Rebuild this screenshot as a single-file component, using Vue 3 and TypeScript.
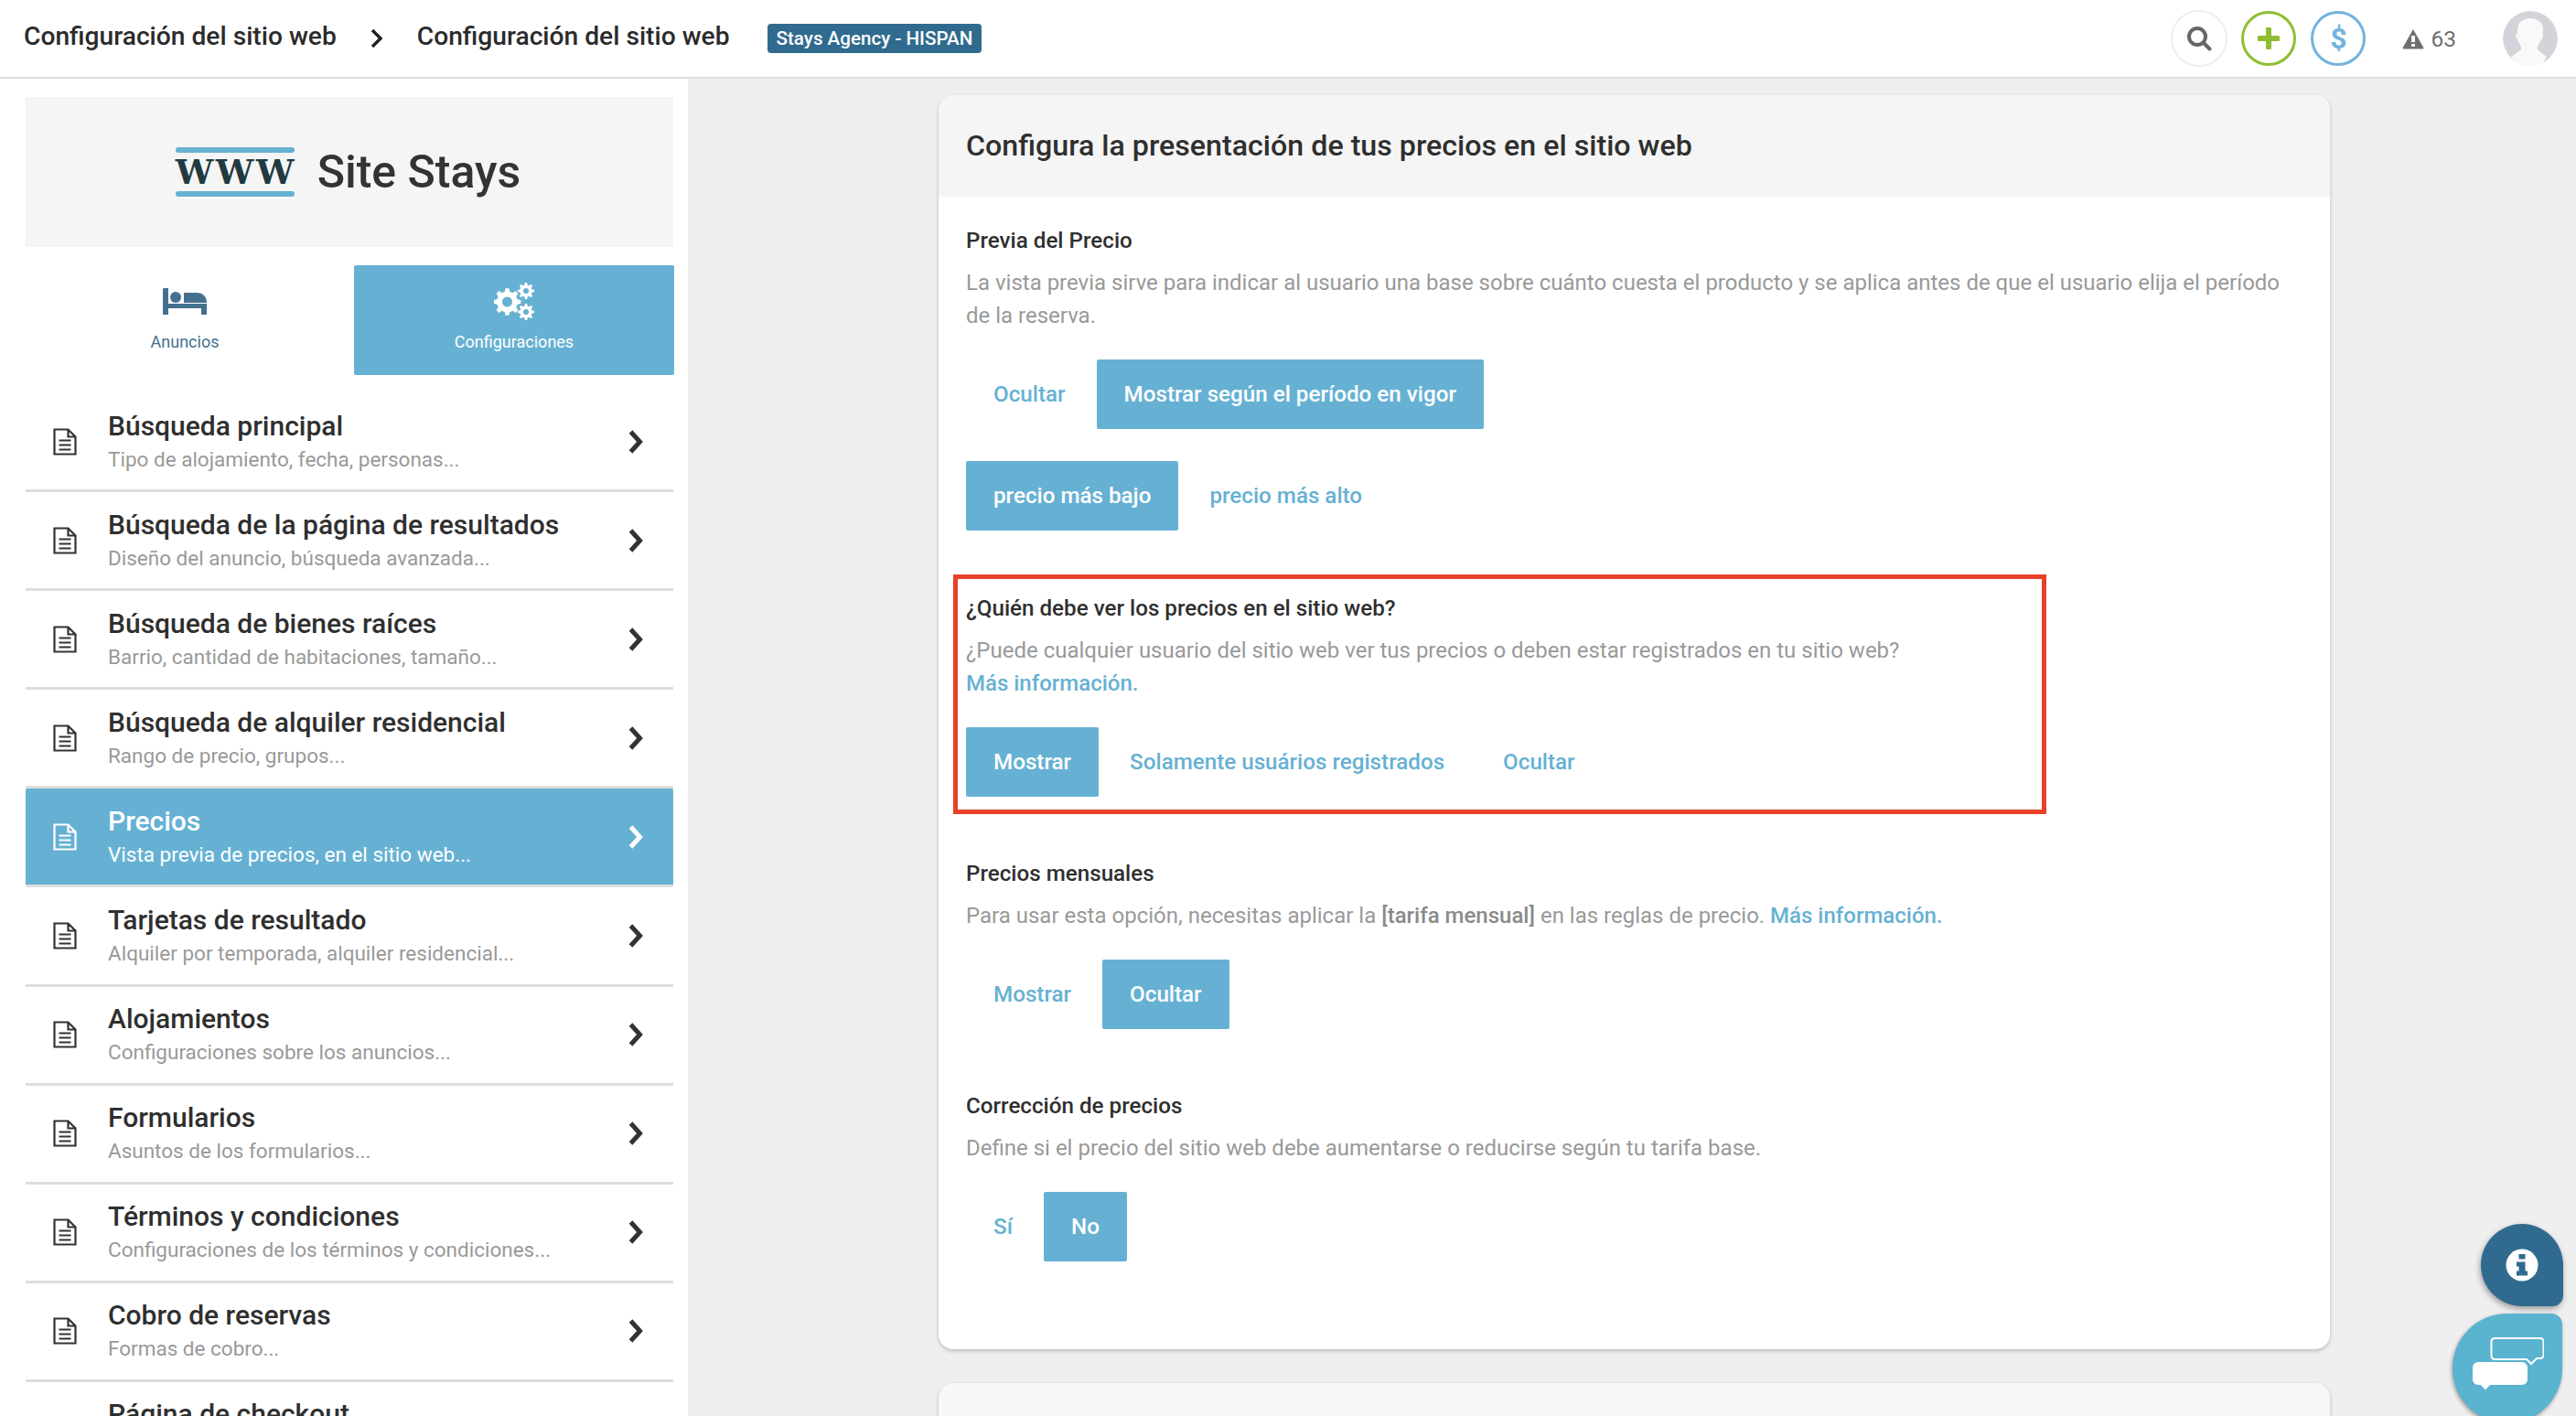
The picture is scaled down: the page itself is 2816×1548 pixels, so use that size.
<script setup lang="ts">
type Row = { t: string; s?: string; active?: boolean }
const rows: Row[] = [
  { t: 'Búsqueda principal', s: 'Tipo de alojamiento, fecha, personas...' },
  { t: 'Búsqueda de la página de resultados', s: 'Diseño del anuncio, búsqueda avanzada...' },
  { t: 'Búsqueda de bienes raíces', s: 'Barrio, cantidad de habitaciones, tamaño...' },
  { t: 'Búsqueda de alquiler residencial', s: 'Rango de precio, grupos...' },
  { t: 'Precios', s: 'Vista previa de precios, en el sitio web...', active: true },
  { t: 'Tarjetas de resultado', s: 'Alquiler por temporada, alquiler residencial...' },
  { t: 'Alojamientos', s: 'Configuraciones sobre los anuncios...' },
  { t: 'Formularios', s: 'Asuntos de los formularios...' },
  { t: 'Términos y condiciones', s: 'Configuraciones de los términos y condiciones...' },
  { t: 'Cobro de reservas', s: 'Formas de cobro...' },
  { t: 'Página de checkout' },
]

function gear(cx: number, cy: number, ro: number, ri: number, hole: number, teeth: number): string {
  const step = (Math.PI * 2) / teeth
  const pts: string[] = []
  const at = (r: number, a: number) => `${(cx + r * Math.cos(a)).toFixed(2)} ${(cy + r * Math.sin(a)).toFixed(2)}`
  for (let i = 0; i < teeth; i++) {
    const a = i * step
    pts.push(at(ri, a - step * 0.3), at(ro, a - step * 0.17), at(ro, a + step * 0.17), at(ri, a + step * 0.3))
  }
  const ring = `M${pts.join('L')}Z`
  const h = `M${cx - hole} ${cy}a${hole} ${hole} 0 1 0 ${hole * 2} 0a${hole} ${hole} 0 1 0 ${-hole * 2} 0Z`
  return ring + h
}
const cogs = gear(14.5, 21, 15, 11.5, 5.5, 8) + gear(35, 9, 9, 6.8, 3, 8) + gear(35, 32, 9, 6.8, 3, 8)
</script>

<template>
  <div class="page">
    <header class="top">
      <div class="crumbs">
        <span class="crumb">Configuración del sitio web</span>
        <svg class="crumb-chev" viewBox="0 0 14 22"><path d="M3 2l9 9-9 9" fill="none" stroke="#222" stroke-width="3.4" /></svg>
        <span class="crumb">Configuración del sitio web</span>
        <span class="badge">Stays Agency - HISPAN</span>
      </div>
      <div class="tools">
        <span class="circle c-search">
          <svg viewBox="0 0 28 28" width="28" height="28"><circle cx="12" cy="12" r="9" fill="none" stroke="#666" stroke-width="4" /><path d="M19 19L25.500 25.500" stroke="#666" stroke-width="4" stroke-linecap="round" /></svg>
        </span>
        <span class="circle c-plus">
          <svg viewBox="0 0 24 24" width="24" height="24"><path d="M12 2v20M2 12h20" stroke="#8fbe35" stroke-width="6" stroke-linecap="round" /></svg>
        </span>
        <span class="circle c-dollar">$</span>
        <span class="alert">
          <svg viewBox="0 0 24 23" width="24" height="23"><path d="M12 1L23.500 21.500a1 1 0 0 1-1 1H1.500a1 1 0 0 1-1-1z" fill="#6f6f6f" /><rect x="10" y="8" width="4" height="7" fill="#fff" /><rect x="10" y="17" width="4" height="3" fill="#fff" /></svg>
          <span>63</span>
        </span>
        <span class="avatar">
          <svg viewBox="0 0 60 60" width="60" height="60"><circle cx="30" cy="30" r="30" fill="#d2d4da" /><path d="M16 20c0-8 7-12 14-12s14 4 14 12c0 3-1 5 0 7 1 1-2 4-3 6-1 3-4 6-3 9 1 2 6 5 10 8l-6 10H18L9 50c4-3 9-6 11-8 1-3-2-6-3-9-1-3-4-5-3-6 2-2 2-4 2-7z" fill="#f8f9f9" /></svg>
        </span>
      </div>
    </header>

    <div class="body">
      <aside class="side">
        <div class="logo">
          <div class="www"><i></i><b>WWW</b><i></i></div>
          <span class="logo-text">Site Stays</span>
        </div>
        <div class="tabs">
          <div class="tab tab-off">
            <svg viewBox="0 0 48 29" width="48" height="29"><path d="M1 0h5v17h42v12h-6v-7H6v7H0V1a1 1 0 0 1 1-1z" fill="#44708f" /><circle cx="14" cy="10" r="6" fill="#44708f" /><path d="M23 5h15a10 10 0 0 1 10 10v1H23z" fill="#44708f" /></svg>
            <span>Anuncios</span>
          </div>
          <div class="tab tab-on">
            <svg viewBox="0 0 44 42" width="44" height="42"><path :d="cogs" fill="#fff" fill-rule="evenodd" /></svg>
            <span>Configuraciones</span>
          </div>
        </div>
        <ul class="list">
          <li v-for="r in rows" :key="r.t" class="row" :class="{ on: r.active }">
            <svg class="doc" viewBox="0 0 26 30" width="26" height="30"><path d="M1.500 1.500h15l8 8v19H1.500zM16.500 1.500v8h8M6.500 13.500h13M6.500 18.500h13M6.500 23.500h13" fill="none" stroke="currentColor" stroke-width="2.200" /></svg>
            <div class="row-text">
              <div class="row-title">{{ r.t }}</div>
              <div v-if="r.s" class="row-sub">{{ r.s }}</div>
            </div>
            <svg class="chev" viewBox="0 0 18 28" width="18" height="28"><path d="M3.500 3l10 11-10 11" fill="none" stroke="currentColor" stroke-width="5" /></svg>
          </li>
        </ul>
      </aside>

      <main class="main">
        <section class="card">
          <h1 class="card-head">Configura la presentación de tus precios en el sitio web</h1>
          <div class="card-body">
            <div class="group g1">
              <h2>Previa del Precio</h2>
              <p>La vista previa sirve para indicar al usuario una base sobre cuánto cuesta el producto y se aplica antes de que el usuario elija el período de la reserva.</p>
              <div class="btns">
                <span class="btn">Ocultar</span>
                <span class="btn on">Mostrar según el período en vigor</span>
              </div>
              <div class="btns second">
                <span class="btn on">precio más bajo</span>
                <span class="btn">precio más alto</span>
              </div>
            </div>

            <div class="group g2">
              <div class="redbox"></div>
              <h2>¿Quién debe ver los precios en el sitio web?</h2>
              <p>¿Puede cualquier usuario del sitio web ver tus precios o deben estar registrados en tu sitio web?<br /><a>Más información.</a></p>
              <div class="btns">
                <span class="btn on">Mostrar</span>
                <span class="btn">Solamente usuários registrados</span>
                <span class="btn">Ocultar</span>
              </div>
            </div>

            <div class="group g3">
              <h2>Precios mensuales</h2>
              <p>Para usar esta opción, necesitas aplicar la <strong>[tarifa mensual]</strong> en las reglas de precio. <a>Más información.</a></p>
              <div class="btns">
                <span class="btn">Mostrar</span>
                <span class="btn on">Ocultar</span>
              </div>
            </div>

            <div class="group g4">
              <h2>Corrección de precios</h2>
              <p>Define si el precio del sitio web debe aumentarse o reducirse según tu tarifa base.</p>
              <div class="btns">
                <span class="btn">Sí</span>
                <span class="btn on">No</span>
              </div>
            </div>
          </div>
        </section>
        <section class="card card-next"></section>
      </main>
    </div>

    <div class="fab fab-info">
      <svg viewBox="0 0 36 36" width="36" height="36"><circle cx="18" cy="18" r="17.500" fill="#fff" /><rect x="14.500" y="6" width="7" height="5.500" fill="#306b8f" /><path d="M12 14.500h9.500v10H24v5H12v-5h2.500v-5H12z" fill="#306b8f" /></svg>
    </div>
    <div class="fab fab-chat">
      <svg viewBox="0 0 78 58" width="78" height="58">
        <path d="M24 1h50a3.500 3.500 0 0 1 3.500 3.500v15a3.500 3.500 0 0 1-3.500 3.500h-4l-6 6-5-5H24a3.500 3.500 0 0 1-3.500-3.500V4.500A3.500 3.500 0 0 1 24 1z" fill="none" stroke="#fff" stroke-width="2" />
        <path d="M6 27h48a6 6 0 0 1 6 6v13a6 6 0 0 1-6 6H19l-5 5.500L9 52H6a6 6 0 0 1-6-6V33a6 6 0 0 1 6-6z" fill="#fff" />
      </svg>
    </div>
  </div>
</template>

<style>
html, body { margin: 0; padding: 0; overflow: hidden; }
</style>

<style scoped>
.page {
  position: relative;
  width: 2816px;
  height: 1548px;
  overflow: hidden;
  display: flex;
  flex-direction: column;
  background: #efefef;
  font-family: Roboto, "Liberation Sans", sans-serif;
  color: #333;
}
.top {
  flex: 0 0 84px;
  box-sizing: content-box;
  height: 84px;
  border-bottom: 2px solid #dedede;
  background: #fff;
  display: flex;
  align-items: center;
  justify-content: space-between;
  padding: 0 20px 0 26px;
}
.crumbs { display: flex; align-items: center; }
.crumb { font-size: 28.200px; font-weight: 500; color: #2b2b2b; position: relative; top: -3px; }
.crumb-chev { width: 14px; height: 22px; margin: 0 38px 0 36px; }
.badge {
  margin-left: 41px;
  background: #306b8f;
  color: #fff;
  font-size: 20.600px;
  font-weight: 500;
  line-height: 32px;
  padding: 0 10px;
  border-radius: 4px;
}
.tools { display: flex; align-items: center; }
.circle {
  box-sizing: border-box;
  width: 60px;
  height: 60px;
  border-radius: 50%;
  display: flex;
  align-items: center;
  justify-content: center;
  margin-right: 16px;
}
.c-search { border: 2px solid #eee; width: 62px; height: 62px; margin-right: 15px; }
.c-plus { border: 3px solid #8fbe35; }
.c-dollar { border: 3px solid #72b3de; color: #72b3de; font-size: 32px; font-weight: 700; margin-right: 40px; }
.alert { display: flex; align-items: center; gap: 7px; font-size: 24.500px; color: #6f6f6f; margin-right: 51px; }
.avatar { display: block; width: 60px; height: 60px; border-radius: 50%; overflow: hidden; }
.avatar svg { display: block; }

.body { flex: 1; display: flex; min-height: 0; }
.side {
  flex: 0 0 752px;
  box-sizing: border-box;
  background: #fff;
  padding: 20px 16px 0 28px;
  overflow: hidden;
}
.logo {
  height: 164px;
  background: #f5f5f5;
  display: flex;
  align-items: center;
  justify-content: center;
  gap: 25px;
  padding-right: 3px;
}
.www { width: 130px; display: flex; flex-direction: column; align-items: stretch; }
.www i { display: block; height: 6px; border-radius: 3px; background: #66b1d3; }
.www b {
  font-family: "DejaVu Serif", serif;
  font-weight: 700;
  font-size: 37px;
  line-height: 42px;
  color: #1f3a42;
  white-space: nowrap;
  letter-spacing: 2.600px;
}
.logo-text { font-size: 50px; font-weight: 500; color: #333; }
.tabs { display: flex; justify-content: space-between; margin: 20px -1px 0 0; }
.tab {
  width: 350px;
  height: 120px;
  box-sizing: border-box;
  display: flex;
  flex-direction: column;
  align-items: center;
  color: #44708f;
  font-size: 18px;
  border-radius: 2px;
}
.tab span { margin-top: auto; margin-bottom: 26px; }
.tab-off { width: 348px; padding-top: 25px; }
.tab-on { background: #66b1d3; color: #fff; padding-top: 19px; }
.list { list-style: none; margin: 20px 0 0; padding: 0; }
.row {
  box-sizing: border-box;
  height: 108.100px;
  display: flex;
  align-items: center;
  border-bottom: 3px solid #dedede;
  color: #333;
}
.doc { flex: none; margin: 0 34px 0 30px; color: #333; }
.row-text { flex: 1; min-width: 0; min-height: 72px; }
.row-title { font-size: 30px; line-height: 38px; font-weight: 500; color: #2f2f2f; white-space: nowrap; }
.row-sub { font-size: 22.500px; line-height: 34px; color: #999; white-space: nowrap; }
.chev { flex: none; margin-right: 32px; color: #333; }
.row.on { background: #66b1d3; color: #fff; border-radius: 2px; }
.row.on .doc, .row.on .chev, .row.on .row-title, .row.on .row-sub { color: #fff; }

.main {
  flex: 1;
  min-width: 0;
  padding: 18px 269px 0 274px;
  overflow: hidden;
}
.card {
  background: #fff;
  border-radius: 16px;
  box-shadow: 0 2px 4px rgba(0,0,0,0.22);
  height: 1371px;
}
.card-next { background: #f7f7f7; margin-top: 37px; height: 100px; }
.card-head {
  margin: 0;
  height: 111px;
  box-sizing: border-box;
  padding: 0 30px 2px;
  display: flex;
  align-items: center;
  background: #f5f5f5;
  border-radius: 16px 16px 0 0;
  font-size: 32.200px;
  font-weight: 500;
  color: #2f2f2f;
}
.card-body { padding: 0 30px; }
.group { position: relative; }
.group h2 { margin: 0; font-size: 24.200px; line-height: 34px; font-weight: 500; color: #2f2f2f; }
.group p { margin: 11px 0 0; font-size: 24px; line-height: 36px; color: #999; }
.group p a { color: #66b1d3; font-weight: 500; }
.group p strong { font-weight: 500; color: #8a8a8a; }
.btns { display: flex; gap: 4px; margin-top: 30px; }
.btns.second { margin-top: 35px; }
.btn {
  height: 76px;
  display: flex;
  align-items: center;
  padding: 0 30px;
  font-size: 24.200px;
  font-weight: 500;
  color: #66b1d3;
  border-radius: 2px;
}
.btn.on { background: #66b1d3; color: #fff; }
.g1 { padding-top: 31px; }
.g2 { margin-top: 68px; }
.g3 { margin-top: 67px; }
.g4 { margin-top: 67px; }
.redbox {
  position: absolute;
  left: -14px;
  top: -20px;
  width: 1195px;
  height: 262px;
  box-sizing: border-box;
  border: 5px solid #e8412a;
  pointer-events: none;
}

.fab { position: absolute; display: flex; align-items: center; justify-content: center; }
.fab-info {
  left: 2712px;
  top: 1338px;
  width: 90px;
  height: 90px;
  background: #306b8f;
  border-radius: 50% 50% 12px 50%;
  box-shadow: -1px 3px 6px rgba(0,0,0,0.35);
}
.fab-chat {
  left: 2681px;
  top: 1436px;
  width: 120px;
  height: 120px;
  background: #5ab3cf;
  border-radius: 50% 12px 50% 50%;
  box-shadow: -1px 2px 4px rgba(0,0,0,0.35);
}
.fab-chat svg { margin: -10px 0 0 2px; }
</style>
